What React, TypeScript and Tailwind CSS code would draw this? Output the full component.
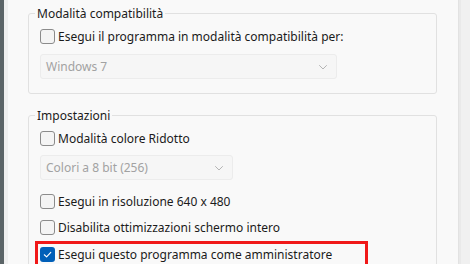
import React from "react";

const font = { fontFamily: '"Noto Sans", "Open Sans", sans-serif' };

function Box({ checked = false }: { checked?: boolean }) {
  if (checked) {
    return (
      <span className="flex h-[15px] w-[15px] shrink-0 items-center justify-center rounded-[3px] bg-[#005fb8]">
        <svg width="11" height="11" viewBox="0 0 12 12" fill="none">
          <path d="M2.5 6.3 L5 8.6 L9.6 3.6" stroke="#ffffff" strokeWidth="1.2" strokeLinecap="round" strokeLinejoin="round" />
        </svg>
      </span>
    );
  }
  return <span className="h-[15px] w-[15px] shrink-0 rounded-[3px] border border-[#8b8b8b] bg-[#f4f4f4]" />;
}

function Check({ label, checked = false }: { label: string; checked?: boolean }) {
  return (
    <div className="flex h-[17px] items-center gap-[3px] text-[12px] leading-[17px] text-[#1b1b1b]">
      <Box checked={checked} />
      <span className="whitespace-nowrap">{label}</span>
    </div>
  );
}

function Select({ label, width }: { label: string; width: string }) {
  return (
    <div className={`flex h-[25px] items-center justify-between rounded-[3px] border border-[#ececec] bg-[#f6f6f6] pl-[5px] pr-[7px] text-[12px] text-[#a2a2a2] ${width}`}>
      <span className="whitespace-nowrap">{label}</span>
      <svg width="12" height="12" viewBox="0 0 12 12" fill="none">
        <path d="M2.5 4.5 L6 8 L9.5 4.5" stroke="#b4b4b4" strokeWidth="1" strokeLinecap="round" strokeLinejoin="round" />
      </svg>
    </div>
  );
}

export default function App() {
  return (
    <div className="flex h-[264px] w-[470px] overflow-hidden bg-[#f9f9f9]" style={font}>
      <div className="w-[4px] shrink-0 bg-[#5b6467]" />
      <div className="w-[4px] shrink-0 bg-[#efefef]" />
      <div className="flex flex-1 flex-col pl-[20px] pr-[21px] pt-[5px]">
        <fieldset className="rounded-[3px] border border-[#e1e1e1] px-[11px] pb-[14px]">
          <legend className="ml-[-5px] px-[2px] text-[12px] leading-[17px] text-[#1b1b1b]">Modalità compatibilità</legend>
          <div className="mt-[6px]">
            <Check label="Esegui il programma in modalità compatibilità per:" />
          </div>
          <div className="mt-[9px]">
            <Select label="Windows 7" width="w-[297px]" />
          </div>
        </fieldset>
        <fieldset className="mt-[13px] rounded-[3px] border border-[#e1e1e1] px-[11px] pb-[14px]">
          <legend className="ml-[-5px] px-[2px] text-[12px] leading-[17px] text-[#1b1b1b]">Impostazioni</legend>
          <div className="mt-[6px]">
            <Check label="Modalità colore Ridotto" />
          </div>
          <div className="mt-[8px]">
            <Select label="Colori a 8 bit (256)" width="w-[193px]" />
          </div>
          <div className="mt-[13px]">
            <Check label="Esegui in risoluzione 640 x 480" />
          </div>
          <div className="mt-[9px]">
            <Check label="Disabilita ottimizzazioni schermo intero" />
          </div>
          <div className="ml-[-5px] mt-[5px] w-[333px] border-[3px] border-[#f01818] pl-[2px] pt-[2px] pb-[6px]">
            <Check label="Esegui questo programma come amministratore" checked />
          </div>
        </fieldset>
      </div>
      <div className="w-[1px] shrink-0 bg-[#e2e2e2]" />
      <div className="w-[2px] shrink-0 bg-[#e9e9e9]" />
      <div className="w-[9px] shrink-0 bg-[#f0f0f0]" />
    </div>
  );
}
